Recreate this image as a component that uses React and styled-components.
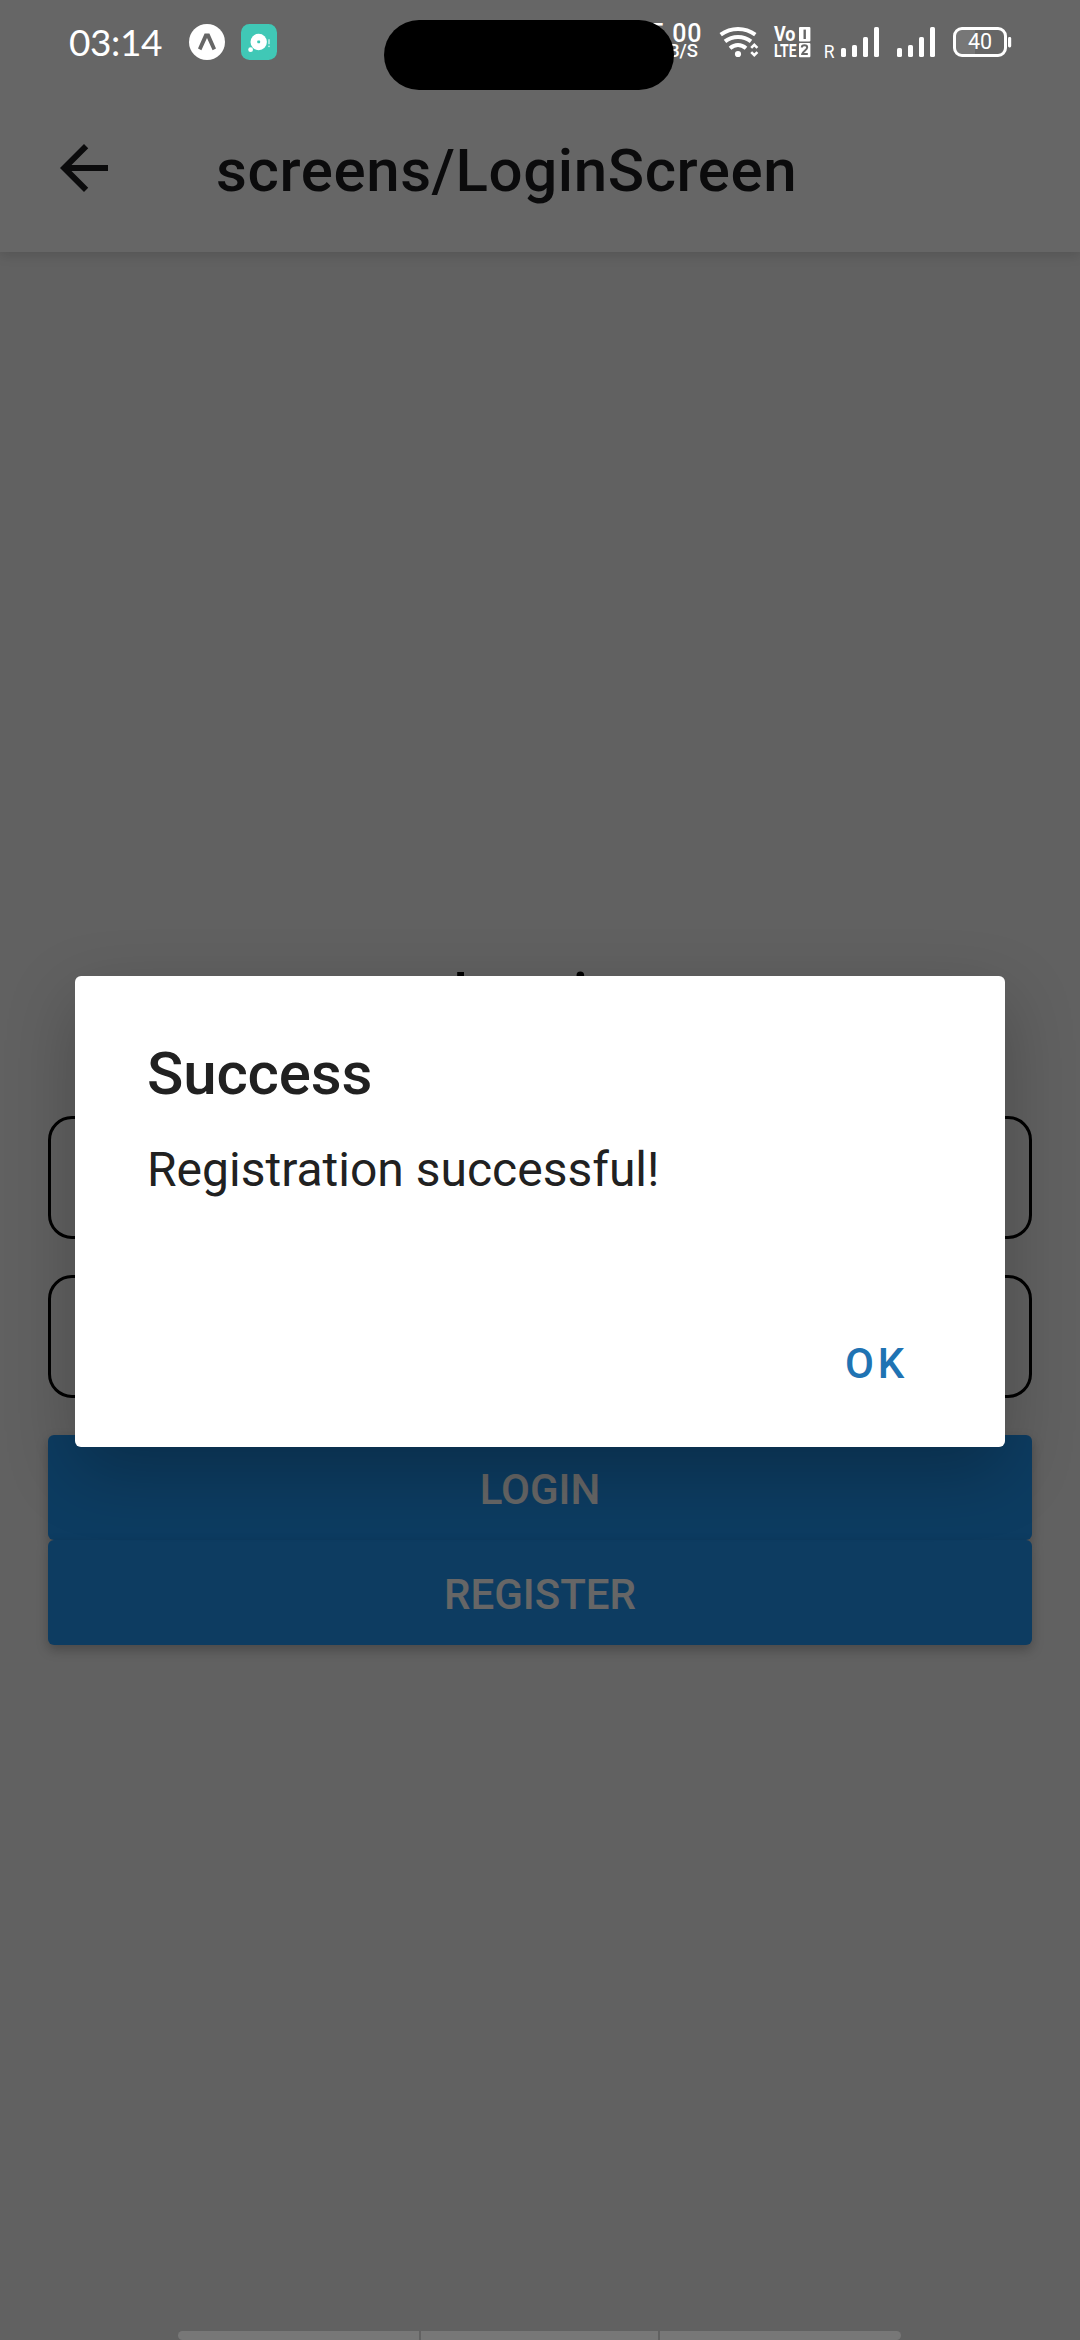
import React from "react";
import styled, { createGlobalStyle } from "styled-components";

const GlobalStyle = createGlobalStyle`
  * { box-sizing: border-box; }
  html, body { margin: 0; padding: 0; }
  body { font-family: Roboto, "Noto Sans", sans-serif; overflow: hidden; }
`;

const Phone = styled.div`
  position: relative;
  width: 1080px;
  height: 2340px;
  overflow: hidden;
  background: #f2f2f2;
`;

const Screen = styled.div`
  display: flex;
  flex-direction: column;
  height: 100%;
`;

const Header = styled.header`
  display: flex;
  align-items: center;
  height: 252px;
  padding: 84px 48px 0;
  background: #fff;
  box-shadow: 0 3px 12px rgba(0, 0, 0, 0.14);
`;

const HeaderTitle = styled.h1`
  margin: 0 0 0 96px;
  padding-top: 5px;
  font-size: 60px;
  line-height: 72px;
  font-weight: 500;
  letter-spacing: 0.6px;
  color: #1c1c1e;
`;

const Form = styled.main`
  flex: 1;
  display: flex;
  flex-direction: column;
  justify-content: center;
  padding: 0 48px;
`;

const FormTitle = styled.h2`
  margin: 0 0 64px;
  font-size: 72px;
  line-height: 105px;
  font-weight: 400;
  text-align: center;
  color: #000;
`;

const Field = styled.div`
  height: 123px;
  margin-bottom: 36px;
  border: 3px solid #000;
  border-radius: 24px;
`;

const FormActions = styled.div`
  display: flex;
  flex-direction: column;
  padding-top: 1px;
`;

const FormButton = styled.button`
  height: 105px;
  padding: 4px 0 0;
  border: 0;
  border-radius: 6px;
  background: #2196f3;
  box-shadow: 0 5px 12px rgba(0, 0, 0, 0.25);
  font: 500 42px/48px Roboto, sans-serif;
  text-transform: uppercase;
  color: #fff;
`;

const Overlay = styled.div`
  position: absolute;
  inset: 0;
  display: flex;
  flex-direction: column;
  background: rgba(0, 0, 0, 0.6);
`;

const StatusBar = styled.div`
  display: flex;
  align-items: center;
  justify-content: space-between;
  height: 84px;
  padding: 0 68px 0 69px;
  color: #fff;
`;

const StatusGroup = styled.div`
  display: flex;
  align-items: center;
  svg { display: block; overflow: visible; }
`;

const Clock = styled.span`
  width: 120px;
  font: 400 37px/44px Lato, sans-serif;
  letter-spacing: -0.4px;
  white-space: nowrap;
`;

const IconSlot = styled.span`
  margin-left: ${(p) => p.$gap}px;
`;

const Speed = styled.span`
  display: flex;
  flex-direction: column;
  align-items: flex-end;
  font-weight: 500;
`;

const SpeedValue = styled.span`
  font-size: 25px;
  line-height: 19px;
  letter-spacing: 0.6px;
`;

const SpeedUnit = styled.span`
  padding-right: 4px;
  font-size: 18.5px;
  line-height: 17px;
`;

const CameraIsland = styled.div`
  position: absolute;
  left: 384px;
  top: 20px;
  width: 290px;
  height: 70px;
  border-radius: 35px;
  background: #000;
`;

const DialogArea = styled.div`
  flex: 1;
  display: flex;
  align-items: center;
  justify-content: center;
  padding-top: 8px;
`;

const Dialog = styled.section`
  display: flex;
  flex-direction: column;
  width: 930px;
  height: 471px;
  padding: 60px 72px 47px;
  border-radius: 6px;
  background: #fff;
  box-shadow: 0 24px 70px rgba(0, 0, 0, 0.24);
`;

const DialogTitle = styled.h2`
  margin: 0;
  font-size: 60px;
  line-height: 76px;
  font-weight: 500;
  letter-spacing: -0.15px;
  color: #212121;
`;

const DialogMessage = styled.p`
  margin: 26px 0 0;
  font-size: 48px;
  line-height: 64px;
  color: #212121;
`;

const DialogActions = styled.div`
  display: flex;
  justify-content: flex-end;
  margin-top: auto;
`;

const DialogAction = styled.button`
  padding: 0 25px 0 24px;
  border: 0;
  background: transparent;
  font: 500 42px/72px Roboto, sans-serif;
  letter-spacing: 3.75px;
  color: #1f73b3;
`;

const NavBar = styled.div`
  display: flex;
  justify-content: center;
  gap: 2px;
  height: 9px;
  padding-right: 1px;
`;

const NavSegment = styled.span`
  width: ${(p) => p.$width}px;
  border-radius: ${(p) => p.$radius || "0"};
  background: #777;
`;

const BackIcon = () => (
  <svg width="72" height="72" viewBox="0 0 24 24" fill="#1c1c1e">
    <path d="M20 11H7.83l5.59-5.59L12 4l-8 8 8 8 1.41-1.41L7.83 13H20v-2z" />
  </svg>
);

const ExpoIcon = () => (
  <svg width="36" height="36" viewBox="0 0 36 36">
    <circle cx="18" cy="18" r="18" fill="#fff" />
    <path d="M15.6 9.4h4.8l6.6 15.2-3.4 1.6L18 14l-5.6 12.2L9 24.6z" fill="#666" />
  </svg>
);

const ChatIcon = () => (
  <svg width="36" height="36" viewBox="0 0 36 36">
    <rect width="36" height="36" rx="8.5" fill="#40c8b6" />
    <circle cx="17.7" cy="18" r="8.2" fill="#fff" />
    <rect x="16.3" y="16.6" width="2.8" height="2.6" rx="0.6" fill="#40c8b6" />
    <circle cx="9.6" cy="25.7" r="2.4" fill="#fff" />
    <path d="M28 15.2v5" stroke="#c5eee9" strokeWidth="1.5" />
    <circle cx="28" cy="22.3" r="0.9" fill="#c5eee9" />
  </svg>
);

const WifiIcon = () => (
  <svg width="40" height="36" viewBox="0 0 40 36" fill="none" stroke="#fff" strokeWidth="4">
    <path d="M1.7 10.6C12 3.1 26 3.1 36.3 10.6" />
    <path d="M6 17.4C13.6 11.6 24.4 11.6 32 17.4" />
    <path d="M11 24.2C16 20 22 20 27 24.2" />
    <circle cx="19" cy="30" r="3.1" fill="#fff" stroke="none" />
    <path d="M32.2 23.9l3.1-3.1 3.1 3.1M32.2 28.1l3.1 3.1 3.1-3.1" strokeWidth="2.6" />
  </svg>
);

const VolteIcon = () => (
  <svg width="37" height="36" viewBox="0 0 37 36" fill="#fff" fontFamily="Roboto, sans-serif" fontWeight="700">
    <text x="0" y="17.2" fontSize="19.5" textLength="21.5" lengthAdjust="spacingAndGlyphs">Vo</text>
    <text x="0" y="33" fontSize="19" textLength="22.5" lengthAdjust="spacingAndGlyphs">LTE</text>
    <rect x="25" y="3" width="11.4" height="14.4" rx="1" />
    <rect x="25" y="18.9" width="11.4" height="14.3" rx="1" />
    <path d="M30.7 5.6v9.4" stroke="#666" strokeWidth="2.4" />
    <path d="M27.8 23.4c0-3 5.4-3 5.4 0 0 2.4-4.6 4-5 6.6h5.6" fill="none" stroke="#666" strokeWidth="2" />
  </svg>
);

const BARS = [
  { x: 0, y: 24 },
  { x: 11, y: 21 },
  { x: 22, y: 13 },
  { x: 33, y: 3 },
];

const SignalIcon = ({ roaming }) => {
  const offset = roaming ? 17 : 0;
  const width = 38 + offset;
  return (
    <svg width={width} height="36" viewBox={`0 0 ${width} 36`} fill="#fff">
      {roaming && (
        <text x="-0.2" y="33.8" fontSize="17.5" fontFamily="Roboto, sans-serif">R</text>
      )}
      {BARS.map((bar) => (
        <rect key={bar.x} x={bar.x + offset} y={bar.y} width="5" height={33 - bar.y} rx="1.6" />
      ))}
    </svg>
  );
};

const BatteryIcon = () => (
  <svg width="59" height="36" viewBox="0 0 59 36">
    <path d="M9 4.5h13v27H9a7 7 0 0 1-7-7v-13a7 7 0 0 1 7-7z" fill="#777" />
    <rect x="1.5" y="4.5" width="51" height="27" rx="7.5" fill="none" stroke="#fff" strokeWidth="3" />
    <rect x="55" y="13" width="3.2" height="10.4" rx="1.4" fill="#fff" />
    <text x="27" y="25.3" fontSize="21.5" textAnchor="middle" fill="#fff" fontFamily="Roboto, sans-serif">40</text>
  </svg>
);

export default function App() {
  return (
    <>
      <GlobalStyle />
      <Phone>
        <Screen>
          <Header>
            <BackIcon />
            <HeaderTitle>screens/LoginScreen</HeaderTitle>
          </Header>
          <Form>
            <FormTitle>Login</FormTitle>
            <Field />
            <Field />
            <FormActions>
              <FormButton>Login</FormButton>
              <FormButton>Register</FormButton>
            </FormActions>
          </Form>
        </Screen>

        <Overlay>
          <StatusBar>
            <StatusGroup>
              <Clock>03:14</Clock>
              <IconSlot $gap={0}><ExpoIcon /></IconSlot>
              <IconSlot $gap={16}><ChatIcon /></IconSlot>
            </StatusGroup>
            <StatusGroup>
              <Speed>
                <SpeedValue>5.00</SpeedValue>
                <SpeedUnit>KB/S</SpeedUnit>
              </Speed>
              <IconSlot $gap={17}><WifiIcon /></IconSlot>
              <IconSlot $gap={15}><VolteIcon /></IconSlot>
              <IconSlot $gap={13}><SignalIcon roaming /></IconSlot>
              <IconSlot $gap={18}><SignalIcon /></IconSlot>
              <IconSlot $gap={18}><BatteryIcon /></IconSlot>
            </StatusGroup>
            <CameraIsland />
          </StatusBar>
          <DialogArea>
            <Dialog role="alertdialog">
              <DialogTitle>Success</DialogTitle>
              <DialogMessage>Registration successful!</DialogMessage>
              <DialogActions>
                <DialogAction>OK</DialogAction>
              </DialogActions>
            </Dialog>
          </DialogArea>
          <NavBar>
            <NavSegment $width={241} $radius="5px 0 0 5px" />
            <NavSegment $width={237} />
            <NavSegment $width={241} $radius="0 5px 5px 0" />
          </NavBar>
        </Overlay>
      </Phone>
    </>
  );
}
